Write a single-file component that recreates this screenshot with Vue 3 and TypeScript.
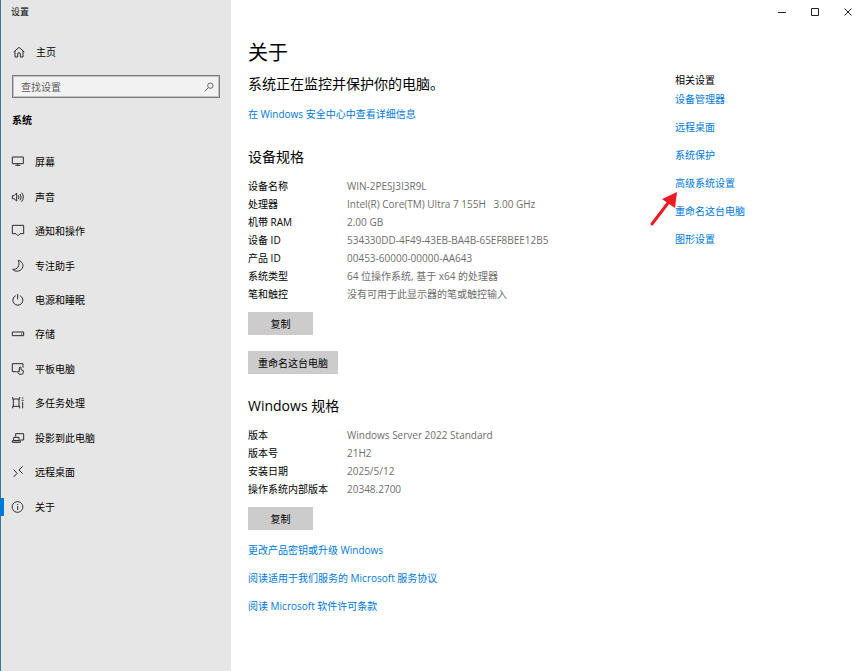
<script setup lang="ts">
import { ref } from 'vue'

interface NavItem {
  label: string
  paths: string[]
}

interface Spec {
  name: string
  value: string
}

const query = ref('')
const current = ref('关于')

const navItems: NavItem[] = [
  { label: '屏幕', paths: ['M4 6H37V26H4Z', 'M20 26V31M13 31H28'] },
  { label: '声音', paths: ['M4 17H9L17 9V33L9 26H4Z', 'M22 16Q26 21 22 27', 'M27 12Q34 21 27 31', 'M32 8Q42 21 32 35'] },
  { label: '通知和操作', paths: ['M4 4H38V29H27L21 35L15 29H4Z'] },
  { label: '专注助手', paths: ['M22 4C34 7 39 18 34 27C28 39 11 39 5 31C19 33 28 20 22 4Z'] },
  { label: '电源和睡眠', paths: ['M14 8A15 15 0 1 0 27 8', 'M20 3V19'] },
  { label: '存储', paths: ['M4 15H38V26H4Z', 'M30 21H34'] },
  { label: '平板电脑', paths: ['M17 29H4V5H36V17', 'M25 29V18Q25 15 28 15T30 18V23L37 26V31Q37 37 31 37H27Q23 37 19 29Q22 26 25 29'] },
  { label: '多任务处理', paths: ['M5 3V8M26 3V8M4 9H27', 'M4 31H27M5 32V37M26 32V37', 'M7 9V31M24 9V31', 'M35 4V8M35 18V37', 'M32 13H38'] },
  { label: '投影到此电脑', paths: ['M14 17V8H38V27H28', 'M8 19H24V29H8Z', 'M4 29H28V34H4Z'] },
  { label: '远程桌面', paths: ['M8 14L18 25L8 36', 'M35 4L24 15L35 26'] },
  { label: '关于', paths: ['M20 5A16 16 0 1 1 19 5Z', 'M20 18V30M20 12V15'] },
]

const deviceSpecs: Spec[] = [
  { name: '设备名称', value: 'WIN-2PESJ3I3R9L' },
  { name: '处理器', value: 'Intel(R) Core(TM) Ultra 7 155H   3.00 GHz' },
  { name: '机带 RAM', value: '2.00 GB' },
  { name: '设备 ID', value: '534330DD-4F49-43EB-BA4B-65EF8BEE12B5' },
  { name: '产品 ID', value: '00453-60000-00000-AA643' },
  { name: '系统类型', value: '64 位操作系统, 基于 x64 的处理器' },
  { name: '笔和触控', value: '没有可用于此显示器的笔或触控输入' },
]

const windowsSpecs: Spec[] = [
  { name: '版本', value: 'Windows Server 2022 Standard' },
  { name: '版本号', value: '21H2' },
  { name: '安装日期', value: '2025/5/12' },
  { name: '操作系统内部版本', value: '20348.2700' },
]

const licenseLinks = ['更改产品密钥或升级 Windows', '阅读适用于我们服务的 Microsoft 服务协议', '阅读 Microsoft 软件许可条款']

const relatedLinks = ['设备管理器', '远程桌面', '系统保护', '高级系统设置', '重命名这台电脑', '图形设置']
const highlighted = '高级系统设置'

function copySpecs(specs: Spec[]): void {
  navigator.clipboard?.writeText(specs.map((s) => `${s.name}\t${s.value}`).join('\n'))
}
</script>

<template>
  <div class="window">
    <aside class="sidebar">
      <div class="app-title">设置</div>
      <a class="home" href="#">
        <svg class="icon" viewBox="0 0 42 42" aria-hidden="true">
          <path d="M5 21L21 7L37 21" />
          <path d="M9 18V36H17V27Q17 23 21 23T25 27V36H33V18" />
        </svg>
        <span>主页</span>
      </a>
      <div class="search">
        <input v-model="query" type="text" placeholder="查找设置" aria-label="查找设置" />
        <svg class="search-icon" viewBox="0 0 30 30" aria-hidden="true">
          <circle cx="19" cy="11" r="8" />
          <path d="M13 17L2 28" />
        </svg>
      </div>
      <h2 class="group">系统</h2>
      <nav class="nav">
        <a
          v-for="item in navItems"
          :key="item.label"
          class="nav-item"
          :class="{ active: item.label === current }"
          href="#"
          @click.prevent="current = item.label"
        >
          <svg class="icon" viewBox="0 0 42 42" aria-hidden="true">
            <path v-for="d in item.paths" :key="d" :d="d" />
          </svg>
          <span>{{ item.label }}</span>
        </a>
      </nav>
    </aside>

    <div class="body">
      <div class="titlebar">
        <button type="button" aria-label="最小化">
          <svg viewBox="0 0 10 10" aria-hidden="true"><path d="M1 5.5H9" /></svg>
        </button>
        <button type="button" aria-label="最大化">
          <svg viewBox="0 0 10 10" aria-hidden="true"><path d="M1.5 1.5H8.5V8.5H1.5Z" /></svg>
        </button>
        <button type="button" aria-label="关闭">
          <svg viewBox="0 0 10 10" aria-hidden="true"><path d="M1.5 1.5L8.5 8.5M8.5 1.5L1.5 8.5" /></svg>
        </button>
      </div>

      <div class="content">
        <main>
          <h1>关于</h1>
          <p class="status">系统正在监控并保护你的电脑。</p>
          <a class="link security" href="#">在 Windows 安全中心中查看详细信息</a>

          <section>
            <h2>设备规格</h2>
            <dl>
              <template v-for="s in deviceSpecs" :key="s.name">
                <dt>{{ s.name }}</dt>
                <dd>{{ s.value }}</dd>
              </template>
            </dl>
            <div class="actions">
              <button class="btn" type="button" @click="copySpecs(deviceSpecs)">复制</button>
              <button class="btn" type="button">重命名这台电脑</button>
            </div>
          </section>

          <section>
            <h2>Windows 规格</h2>
            <dl>
              <template v-for="s in windowsSpecs" :key="s.name">
                <dt>{{ s.name }}</dt>
                <dd>{{ s.value }}</dd>
              </template>
            </dl>
            <div class="actions">
              <button class="btn" type="button" @click="copySpecs(windowsSpecs)">复制</button>
            </div>
          </section>

          <div class="links license">
            <a v-for="l in licenseLinks" :key="l" class="link" href="#">{{ l }}</a>
          </div>
        </main>

        <aside class="related">
          <h3>相关设置</h3>
          <div class="links">
            <a v-for="l in relatedLinks" :key="l" class="link" href="#">
              {{ l }}
              <svg v-if="l === highlighted" class="arrow" viewBox="0 0 30 36" aria-hidden="true">
                <path class="shaft" d="M3 33L19 12" />
                <path class="head" d="M28 1L26 17L20 13L13 8Z" />
              </svg>
            </a>
          </div>
        </aside>
      </div>
    </div>
  </div>
</template>

<style>
body {
  margin: 0;
  background: #fff;
}
</style>

<style scoped>
.window {
  display: grid;
  grid-template-columns: 231px minmax(0, 1fr);
  min-height: 100vh;
  font-family: 'Open Sans', 'Noto Sans CJK SC', sans-serif;
  font-size: 10px;
  line-height: 18px;
  color: #000;
}

h1,
h2,
h3,
p,
dl,
dd {
  margin: 0;
  font-weight: 400;
}

a {
  text-decoration: none;
  color: inherit;
}

button,
input {
  font: inherit;
  color: inherit;
}

.sidebar {
  box-sizing: border-box;
  border-left: 1px solid #3a7599;
  background: #e6e6e6;
}

.app-title {
  padding-left: 10px;
  font-size: 9px;
  line-height: 24px;
}

.icon {
  flex: none;
  width: 14px;
  height: 14px;
  fill: none;
  stroke: #2b2b2b;
  stroke-width: 3;
}

.home {
  display: flex;
  align-items: center;
  gap: 10px;
  height: 20px;
  margin-top: 18px;
  padding-left: 11px;
}

.search {
  display: flex;
  align-items: center;
  box-sizing: border-box;
  height: 23px;
  margin: 13px 11px 0;
  padding: 0 5px 0 8px;
  border: 1px solid #7a7a7a;
  outline: 1px solid #c4c4c4;
  outline-offset: -2px;
  background: #f2f2f2;
}

.search input {
  flex: 1;
  min-width: 0;
  padding: 0;
  border: 0;
  outline: 0;
  background: none;
}

.search input::placeholder {
  color: #5c5c5c;
  opacity: 1;
}

.search-icon {
  flex: none;
  width: 10px;
  height: 10px;
  fill: none;
  stroke: #666;
  stroke-width: 3;
}

.group {
  margin: 13px 11px 0;
  font-size: 10px;
  font-weight: 700;
}

.nav {
  display: grid;
  grid-auto-rows: 1fr;
  height: 379px;
  margin-top: 16px;
}

.nav-item {
  position: relative;
  display: flex;
  align-items: center;
  gap: 10px;
  padding-left: 10px;
}

.nav-item.active::before {
  content: '';
  position: absolute;
  left: -1px;
  width: 4px;
  height: 18px;
  background: #0078d7;
}

.titlebar {
  display: flex;
  justify-content: flex-end;
  height: 24px;
  padding-right: 1px;
}

.titlebar button {
  display: flex;
  align-items: center;
  justify-content: center;
  width: 33px;
  padding: 0;
  border: 0;
  background: none;
}

.titlebar svg {
  width: 10px;
  height: 10px;
  fill: none;
  stroke: #222;
}

.content {
  display: grid;
  grid-template-columns: minmax(0, 1fr) 190px;
  padding: 14px 0 24px 17px;
}

h1 {
  font-size: 20px;
  line-height: 30px;
}

.status {
  margin-top: 6px;
  font-size: 14px;
  line-height: 20px;
}

.link {
  color: #0078d7;
}

.security {
  display: block;
  width: fit-content;
  margin-top: 11px;
}

section {
  margin-top: 24px;
}

section + section {
  margin-top: 22px;
}

section h2 {
  font-size: 14px;
  line-height: 20px;
}

dl {
  display: grid;
  grid-template-columns: 99px minmax(0, 1fr);
  grid-auto-rows: 18px;
  margin-top: 10px;
}

dd {
  color: #6e6e6e;
  white-space: pre;
}

.actions {
  display: flex;
  flex-direction: column;
  align-items: flex-start;
  gap: 16px;
  margin-top: 9px;
}

.btn {
  min-width: 65px;
  height: 23px;
  padding: 0 10px;
  border: 0;
  background: #ccc;
}

.links {
  display: flex;
  flex-direction: column;
  align-items: flex-start;
  gap: 10px;
}

.license {
  margin-top: 11px;
}

.related {
  padding-top: 33px;
}

.related h3 {
  font-size: 10px;
}

.related .links {
  margin-top: 1px;
}

.related .link {
  position: relative;
}

.arrow {
  position: absolute;
  top: 17px;
  left: -26px;
  width: 30px;
  height: 36px;
}

.shaft {
  fill: none;
  stroke: #ed1c24;
  stroke-width: 3;
  stroke-linecap: round;
}

.head {
  fill: #ed1c24;
}
</style>
